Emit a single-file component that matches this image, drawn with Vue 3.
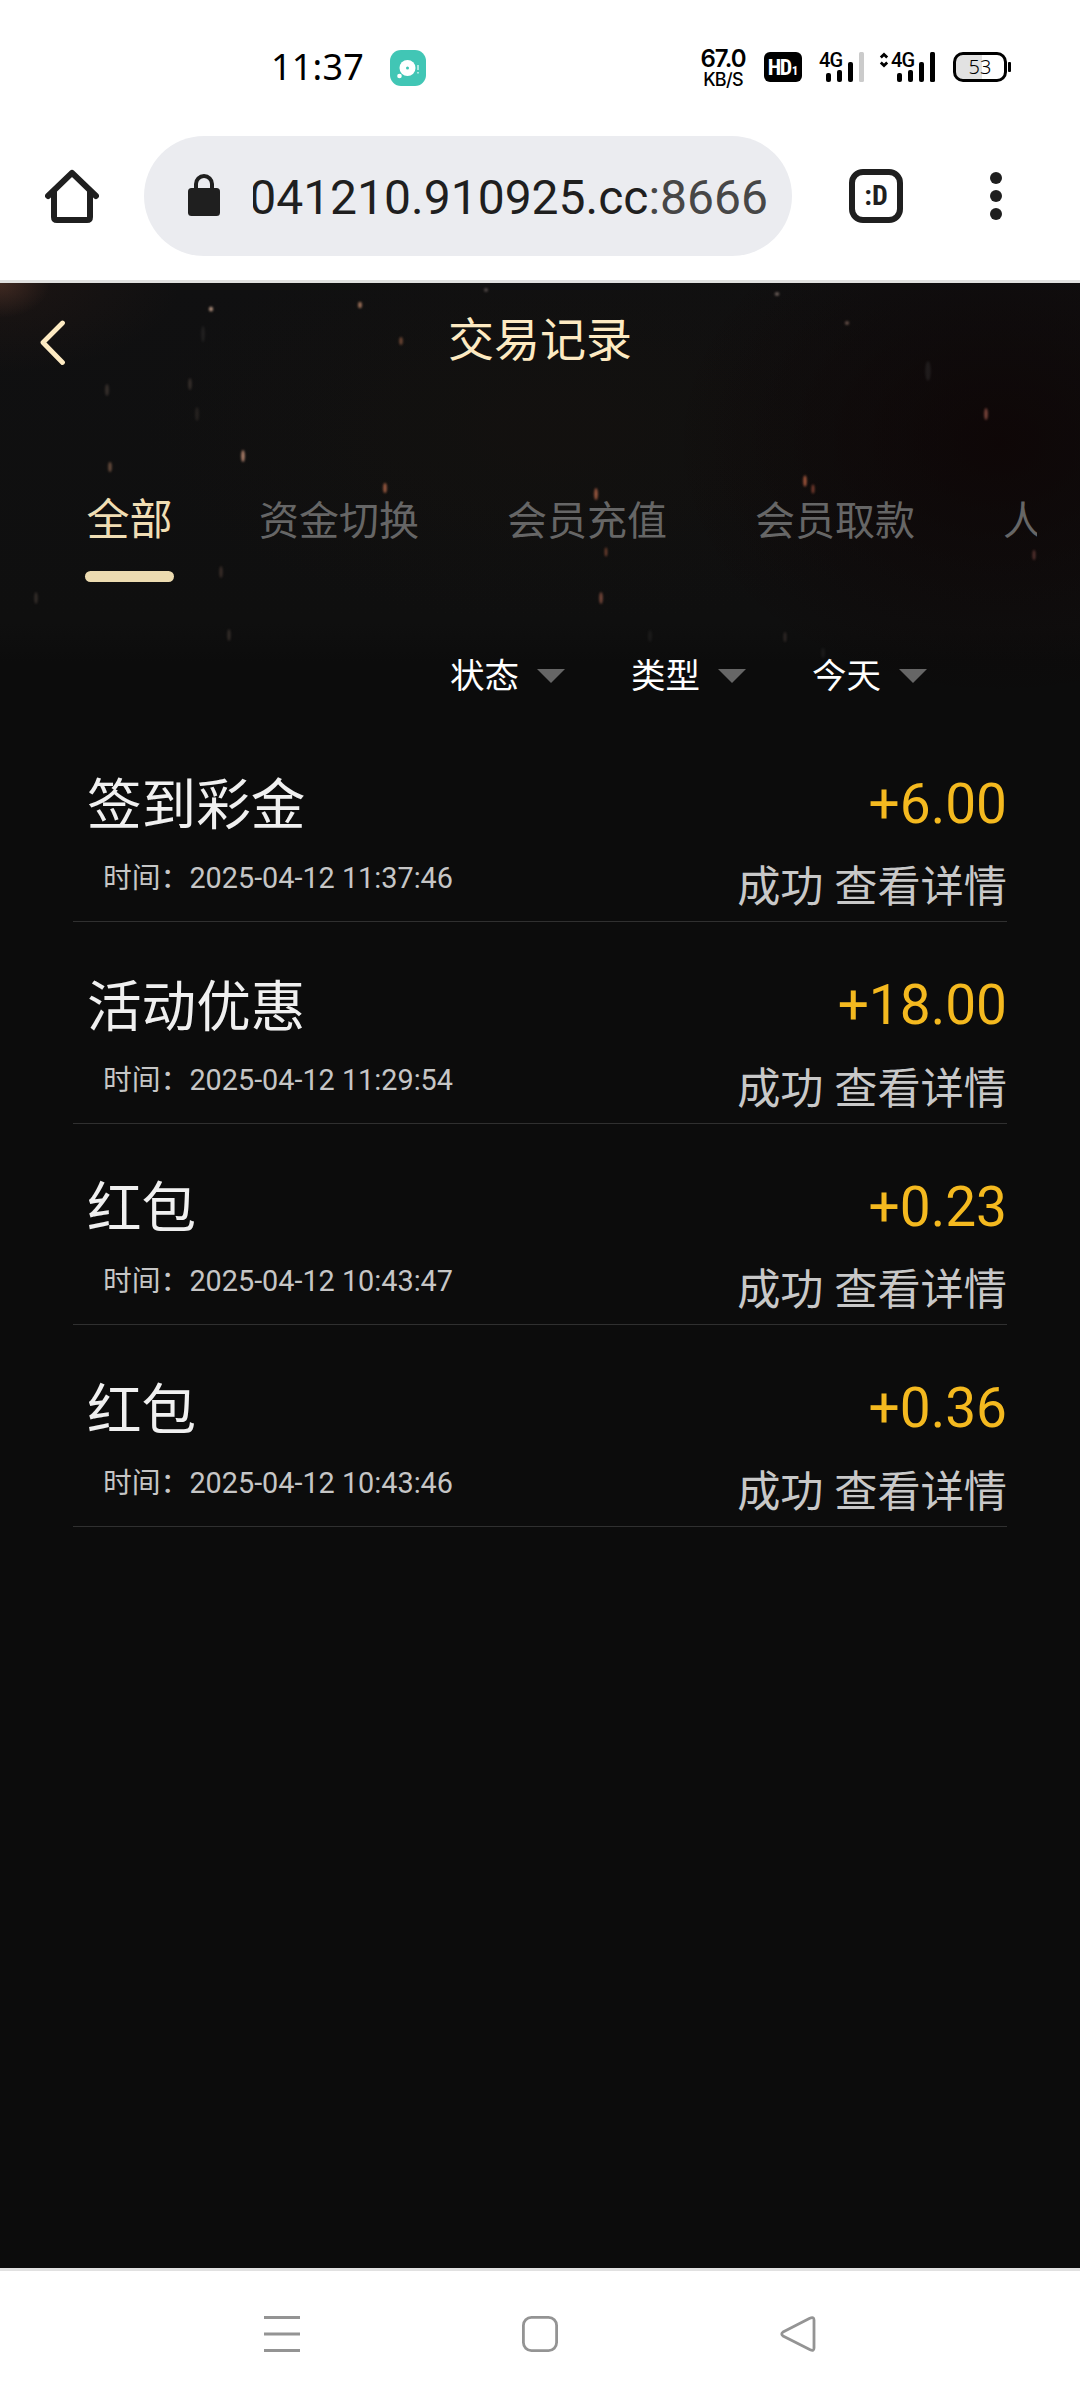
<script setup>
const tabs = ['全部', '资金切换', '会员充值', '会员取款', '人']
const filters = ['状态', '类型', '今天']
const records = [
  { title: '签到彩金', time: '2025-04-12 11:37:46', amount: '+6.00' },
  { title: '活动优惠', time: '2025-04-12 11:29:54', amount: '+18.00' },
  { title: '红包', time: '2025-04-12 10:43:47', amount: '+0.23' },
  { title: '红包', time: '2025-04-12 10:43:46', amount: '+0.36' },
]
// Embers: x, y, rx, ry, colour, opacity (relative to the page area)
const sparks = [
  [211, 26, 2.2, 2.5, '#c9a48e', 0.8], [360, 22, 2, 3.2, '#c78e70', 0.7],
  [486, 7, 2, 2, '#8a7c78', 0.5], [401, 58, 1.8, 4, '#a3674a', 0.6],
  [203, 51, 1.8, 8, '#6a6460', 0.2], [107, 107, 2, 6, '#77655a', 0.35],
  [190, 101, 1.8, 6, '#77655a', 0.35], [197, 131, 2, 7, '#77655a', 0.2],
  [243, 173, 1.8, 6, '#d09a80', 0.8], [110, 184, 1.8, 5, '#a97a5e', 0.55],
  [385, 205, 1.8, 5, '#c5714f', 0.75], [221, 289, 1.7, 6, '#775a4e', 0.4],
  [36, 315, 1.7, 6, '#77655a', 0.35], [229, 352, 1.7, 6, '#77655a', 0.35],
  [777, 11, 2.4, 2, '#99857f', 0.6], [847, 40, 2.2, 2, '#96766a', 0.6],
  [928, 88, 2.8, 10, '#5c5c5c', 0.22], [986, 131, 1.8, 6, '#b06355', 0.65],
  [596, 211, 1.8, 6, '#c76f50', 0.75], [805, 198, 1.7, 5.5, '#d06e4c', 0.75],
  [813, 206, 1.5, 4.5, '#b0573f', 0.65], [606, 269, 1.3, 4.5, '#a45c40', 0.65],
  [1034, 272, 1.5, 5, '#9b5a53', 0.5], [601, 315, 1.8, 6, '#a86450', 0.65],
  [785, 354, 1.5, 5, '#6b5650', 0.35], [650, 353, 2, 6, '#504c4a', 0.2],
  [823, 370, 2, 5, '#504c4a', 0.2],
]
</script>

<template>
  <div class="screen">
    <header class="status">
      <div class="clock">11:37</div>
      <svg class="app-badge" width="36" height="36" viewBox="0 0 36 36">
        <rect width="36" height="36" rx="11" fill="#41c6b5" />
        <circle cx="17.5" cy="18" r="8" fill="#fff" />
        <circle cx="17.5" cy="18" r="1.5" fill="#41c6b5" />
        <circle cx="9.5" cy="26" r="2.3" fill="#fff" />
        <path d="M28 15v5M28 22v1.5" stroke="#b9ece5" stroke-width="1.8" />
      </svg>
      <div class="speed"><b>67.0</b><span>KB/S</span></div>
      <div class="hd"><b>HD</b><i>1</i></div>
      <div class="signal">
        <span class="net">4G</span>
        <svg width="39" height="30" viewBox="0 0 39 30">
          <rect y="21" width="5" height="9" rx="2" />
          <rect x="11" y="18" width="5" height="12" rx="2" />
          <rect x="22" y="10" width="5" height="20" rx="2" />
          <rect x="33" width="5" height="30" rx="1.500" fill="#cbcbcb" />
        </svg>
      </div>
      <div class="signal second">
        <span class="net">4G</span>
        <svg width="57" height="30" viewBox="0 0 57 30">
          <path d="M1.800 5.500 5 2.500l3.200 3M1.800 10.500l3.200 3 3.200-3" fill="none" stroke="#000" stroke-width="2.800" />
          <rect x="18" y="21" width="5" height="9" rx="2" />
          <rect x="29" y="18" width="5" height="12" rx="2" />
          <rect x="40" y="10" width="5" height="20" rx="2" />
          <rect x="51" width="5" height="30" rx="1.500" />
        </svg>
      </div>
      <svg class="battery" width="58" height="30" viewBox="0 0 58 30">
        <path d="M9 2h20v26H9q-7 0-7-7V9q0-7 7-7z" fill="#e2e2e2" />
        <rect x="1.500" y="1.500" width="51" height="27" rx="8.500" fill="none" stroke="#000" stroke-width="3" />
        <rect x="55" y="10" width="3" height="10" rx="1" />
        <text x="27" y="22" font-size="20" text-anchor="middle" class="thin">53</text>
      </svg>
    </header>

    <div class="browser">
      <svg class="home" width="54" height="54" viewBox="0 0 54 54" fill="none" stroke="#1f1f1f" stroke-width="6" stroke-linecap="round">
        <path d="M3 27 27 3.800 51 27" stroke-linejoin="round" />
        <path d="M9 22v26q0 3 3 3h30q3 0 3-3V22" stroke-linecap="butt" />
      </svg>
      <div class="pill">
        <svg width="32" height="42" viewBox="0 0 32 42">
          <rect y="14" width="32" height="28" rx="3.500" fill="#1f1f1f" />
          <path d="M8 16v-6a8 8 0 0 1 16 0v6" fill="none" stroke="#1f1f1f" stroke-width="4" />
        </svg>
        <div class="url"><span>041210.910925.cc<i>:8666</i></span></div>
      </div>
      <div class="tabcount">:D</div>
      <svg class="dots" width="12" height="48" viewBox="0 0 12 48" fill="#1f1f1f">
        <circle cx="6" cy="6" r="6" /><circle cx="6" cy="24" r="6" /><circle cx="6" cy="42" r="6" />
      </svg>
    </div>

    <main class="page">
      <svg class="embers" width="1080" height="400" viewBox="0 0 1080 400">
        <defs><filter id="soft" x="-100%" y="-100%" width="300%" height="300%"><feGaussianBlur stdDeviation="1" /></filter></defs>
        <ellipse v-for="(s, i) in sparks" :key="i" :cx="s[0]" :cy="s[1]" :rx="s[2]" :ry="s[3]" :fill="s[4]" :opacity="s[5]" filter="url(#soft)" />
      </svg>
      <div class="titlebar">
        <svg width="26" height="46" viewBox="0 0 26 46" fill="none" stroke="#fdeac2" stroke-width="4.800" stroke-linecap="round" stroke-linejoin="round">
          <path d="M22.500 3 3 22.500l19.500 20" />
        </svg>
        <h1>交易记录</h1>
      </div>
      <nav class="tabs">
        <div v-for="(t, i) in tabs" :key="t" class="tab" :class="{ active: i === 0 }">{{ t }}</div>
      </nav>
      <div class="filters">
        <div v-for="f in filters" :key="f" class="filter">
          <span>{{ f }}</span><svg width="28" height="14" viewBox="0 0 28 14"><path d="M0 0h28L14 14z" fill="#666" /></svg>
        </div>
      </div>
      <ul class="records">
        <li v-for="(r, i) in records" :key="i">
          <div class="left">
            <div class="name">{{ r.title }}</div>
            <div class="time">时间：{{ r.time }}</div>
          </div>
          <div class="right">
            <div class="amount">{{ r.amount }}</div>
            <div class="state">成功 查看详情</div>
          </div>
        </li>
      </ul>
    </main>

    <footer class="navbar">
      <svg width="36" height="36" viewBox="0 0 36 36" stroke="#949494" stroke-width="3"><path d="M0 1.500h36M0 18h36M0 34.500h36" /></svg>
      <svg width="36" height="36" viewBox="0 0 36 36" fill="none" stroke="#949494" stroke-width="2.800"><rect x="1.400" y="1.400" width="33.200" height="33.200" rx="8" /></svg>
      <svg width="36" height="36" viewBox="0 0 36 36" fill="none" stroke="#949494" stroke-width="2.800" stroke-linejoin="round"><path d="M29.800 2.200Q34 .5 34 4v28q0 3.500-3.800 1.700L3 20Q.5 18 3 16z" /></svg>
    </footer>
  </div>
</template>

<style>
body { background: #fff; }
</style>

<style scoped>
.screen {
  display: flex;
  flex-direction: column;
  width: 1080px;
  height: 2400px;
  overflow: hidden;
  background: #fff;
  font-family: Roboto, "Noto Sans CJK SC", sans-serif;
}
svg { display: block; flex: none; }
.status { display: flex; align-items: flex-start; height: 136px; box-sizing: border-box; padding: 50px 0 0 271px; color: #000; }
.clock { flex: none; width: 119px; font: 36px/36px "Noto Sans", sans-serif; letter-spacing: 0.2px; white-space: nowrap; margin-top: -1px; }
.speed { display: flex; flex: none; flex-direction: column; align-items: center; width: 48px; margin-left: 273px; margin-top: -3px; }
.speed b { font: 600 24px/24px Inter, sans-serif; letter-spacing: -1px; }
.speed span { font: 500 18px/17px Inter, sans-serif; letter-spacing: -0.7px; }
.hd { display: flex; flex: none; align-items: baseline; justify-content: center; gap: 1px; width: 38px; height: 30px; margin: 2px 0 0 17px; border-radius: 6px; background: #000; color: #fff; line-height: 31px; font-family: "Roboto Condensed", Roboto, sans-serif; }
.hd b { font-size: 22px; font-weight: 700; letter-spacing: -1.500px; }
.hd i { font-size: 13px; font-weight: 700; font-style: normal; line-height: 16px; }
.signal { position: relative; flex: none; display: flex; width: 45px; height: 30px; margin: 2px 0 0 18px; justify-content: flex-end; }
.net { position: absolute; left: -1px; top: -2px; font: 500 20px/20px Roboto, sans-serif; letter-spacing: -0.8px; }
.second { width: 57px; margin-left: 14px; }
.second .net { left: 12px; }
.battery { margin: 2px 0 0 17px; }
.thin { font-family: "Noto Sans", sans-serif; font-weight: 300; }

.browser { display: flex; align-items: center; height: 147px; box-sizing: border-box; padding: 0 0 24px 45px; border-bottom: 3px solid #e0e0df; }
.pill { display: flex; align-items: center; width: 648px; height: 120px; margin-left: 45px; border-radius: 60px; background: #ebecf0; box-sizing: border-box; padding: 0 25px 0 44px; }
.pill svg { margin-top: -2px; }
.url { display: flex; justify-content: flex-end; flex: none; width: 515px; margin: 3px 0 0 33px; overflow: hidden; font-size: 48px; line-height: 60px; color: #1f1f1f; white-space: nowrap; }
.url i { font-style: normal; color: #474747; }
.tabcount { width: 54px; height: 54px; box-sizing: border-box; margin-left: 57px; border: 6px solid #1f1f1f; border-radius: 14px; font: 700 28px/42px "Roboto Condensed", Roboto, sans-serif; text-align: center; color: #1f1f1f; }
.dots { margin-left: 87px; }

.page {
  position: relative;
  flex: none;
  height: 1985px;
  background:
    radial-gradient(50px 35px at 0 0, rgba(100, 62, 48, 0.5), transparent),
    radial-gradient(180px 90px at 0 0, rgba(50, 30, 24, 0.35), transparent),
    radial-gradient(330px 260px at 1000px 160px, rgba(14, 4, 4, 0.75), transparent),
    radial-gradient(420px 200px at 560px 140px, rgba(22, 18, 14, 0.5), transparent),
    linear-gradient(#101011, #0f0f0f 340px, #0c0c0c 380px);
  background-color: #0c0c0c;
}
.embers { position: absolute; left: 0; top: 0; }
.titlebar { position: relative; display: flex; align-items: center; height: 120px; padding-left: 40px; }
.titlebar h1 { flex: 1; margin: -6px 66px 0 0; text-align: center; font-size: 46px; line-height: 60px; font-weight: 400; color: #fdeac2; }
.tabs { position: relative; display: flex; margin: 67px 43px 0 42px; height: 114px; overflow: hidden; font-size: 40px; color: #666; }
.tab { flex: none; margin: 0 44px; line-height: 103px; white-space: nowrap; }
.tab.active { display: flex; flex-direction: column; height: 112px; margin: 0 41px 0 43px; width: 89px; text-align: center; font-size: 43px; line-height: 101px; color: #f0deb4; }
.tab.active::after { content: ""; height: 11px; border-radius: 6px; background: #ecdbb0; }
.filters { position: relative; display: flex; gap: 66px; margin: 67px 0 0 450px; }
.filter { display: flex; align-items: center; gap: 18px; font-size: 34.500px; line-height: 50px; color: #fff; }
.records { list-style: none; margin: 0; padding: 19.500px 73px 0; }
.records li { display: flex; justify-content: space-between; height: 201.500px; box-sizing: border-box; padding: 0 0 0 14px; border-bottom: 1px solid #303030; }
.left { padding-top: 51.500px; }
.name { font-size: 54.600px; line-height: 66px; color: #f0f0f0; }
.time { padding-left: 16px; margin-top: 19px; font-size: 28.800px; line-height: 42px; color: #c6c6c6; }
.right { padding-top: 50px; text-align: right; }
.amount { font-size: 55px; line-height: 66px; color: #f4b91f; }
.state { margin-top: 21.500px; font-size: 43.200px; line-height: 60px; color: #c8c8c8; }

.navbar { display: flex; align-items: flex-start; justify-content: space-between; flex: 1; box-sizing: border-box; border-top: 3px solid #e1e1e1; padding: 45px 264px 0; background: #fff; }
</style>
